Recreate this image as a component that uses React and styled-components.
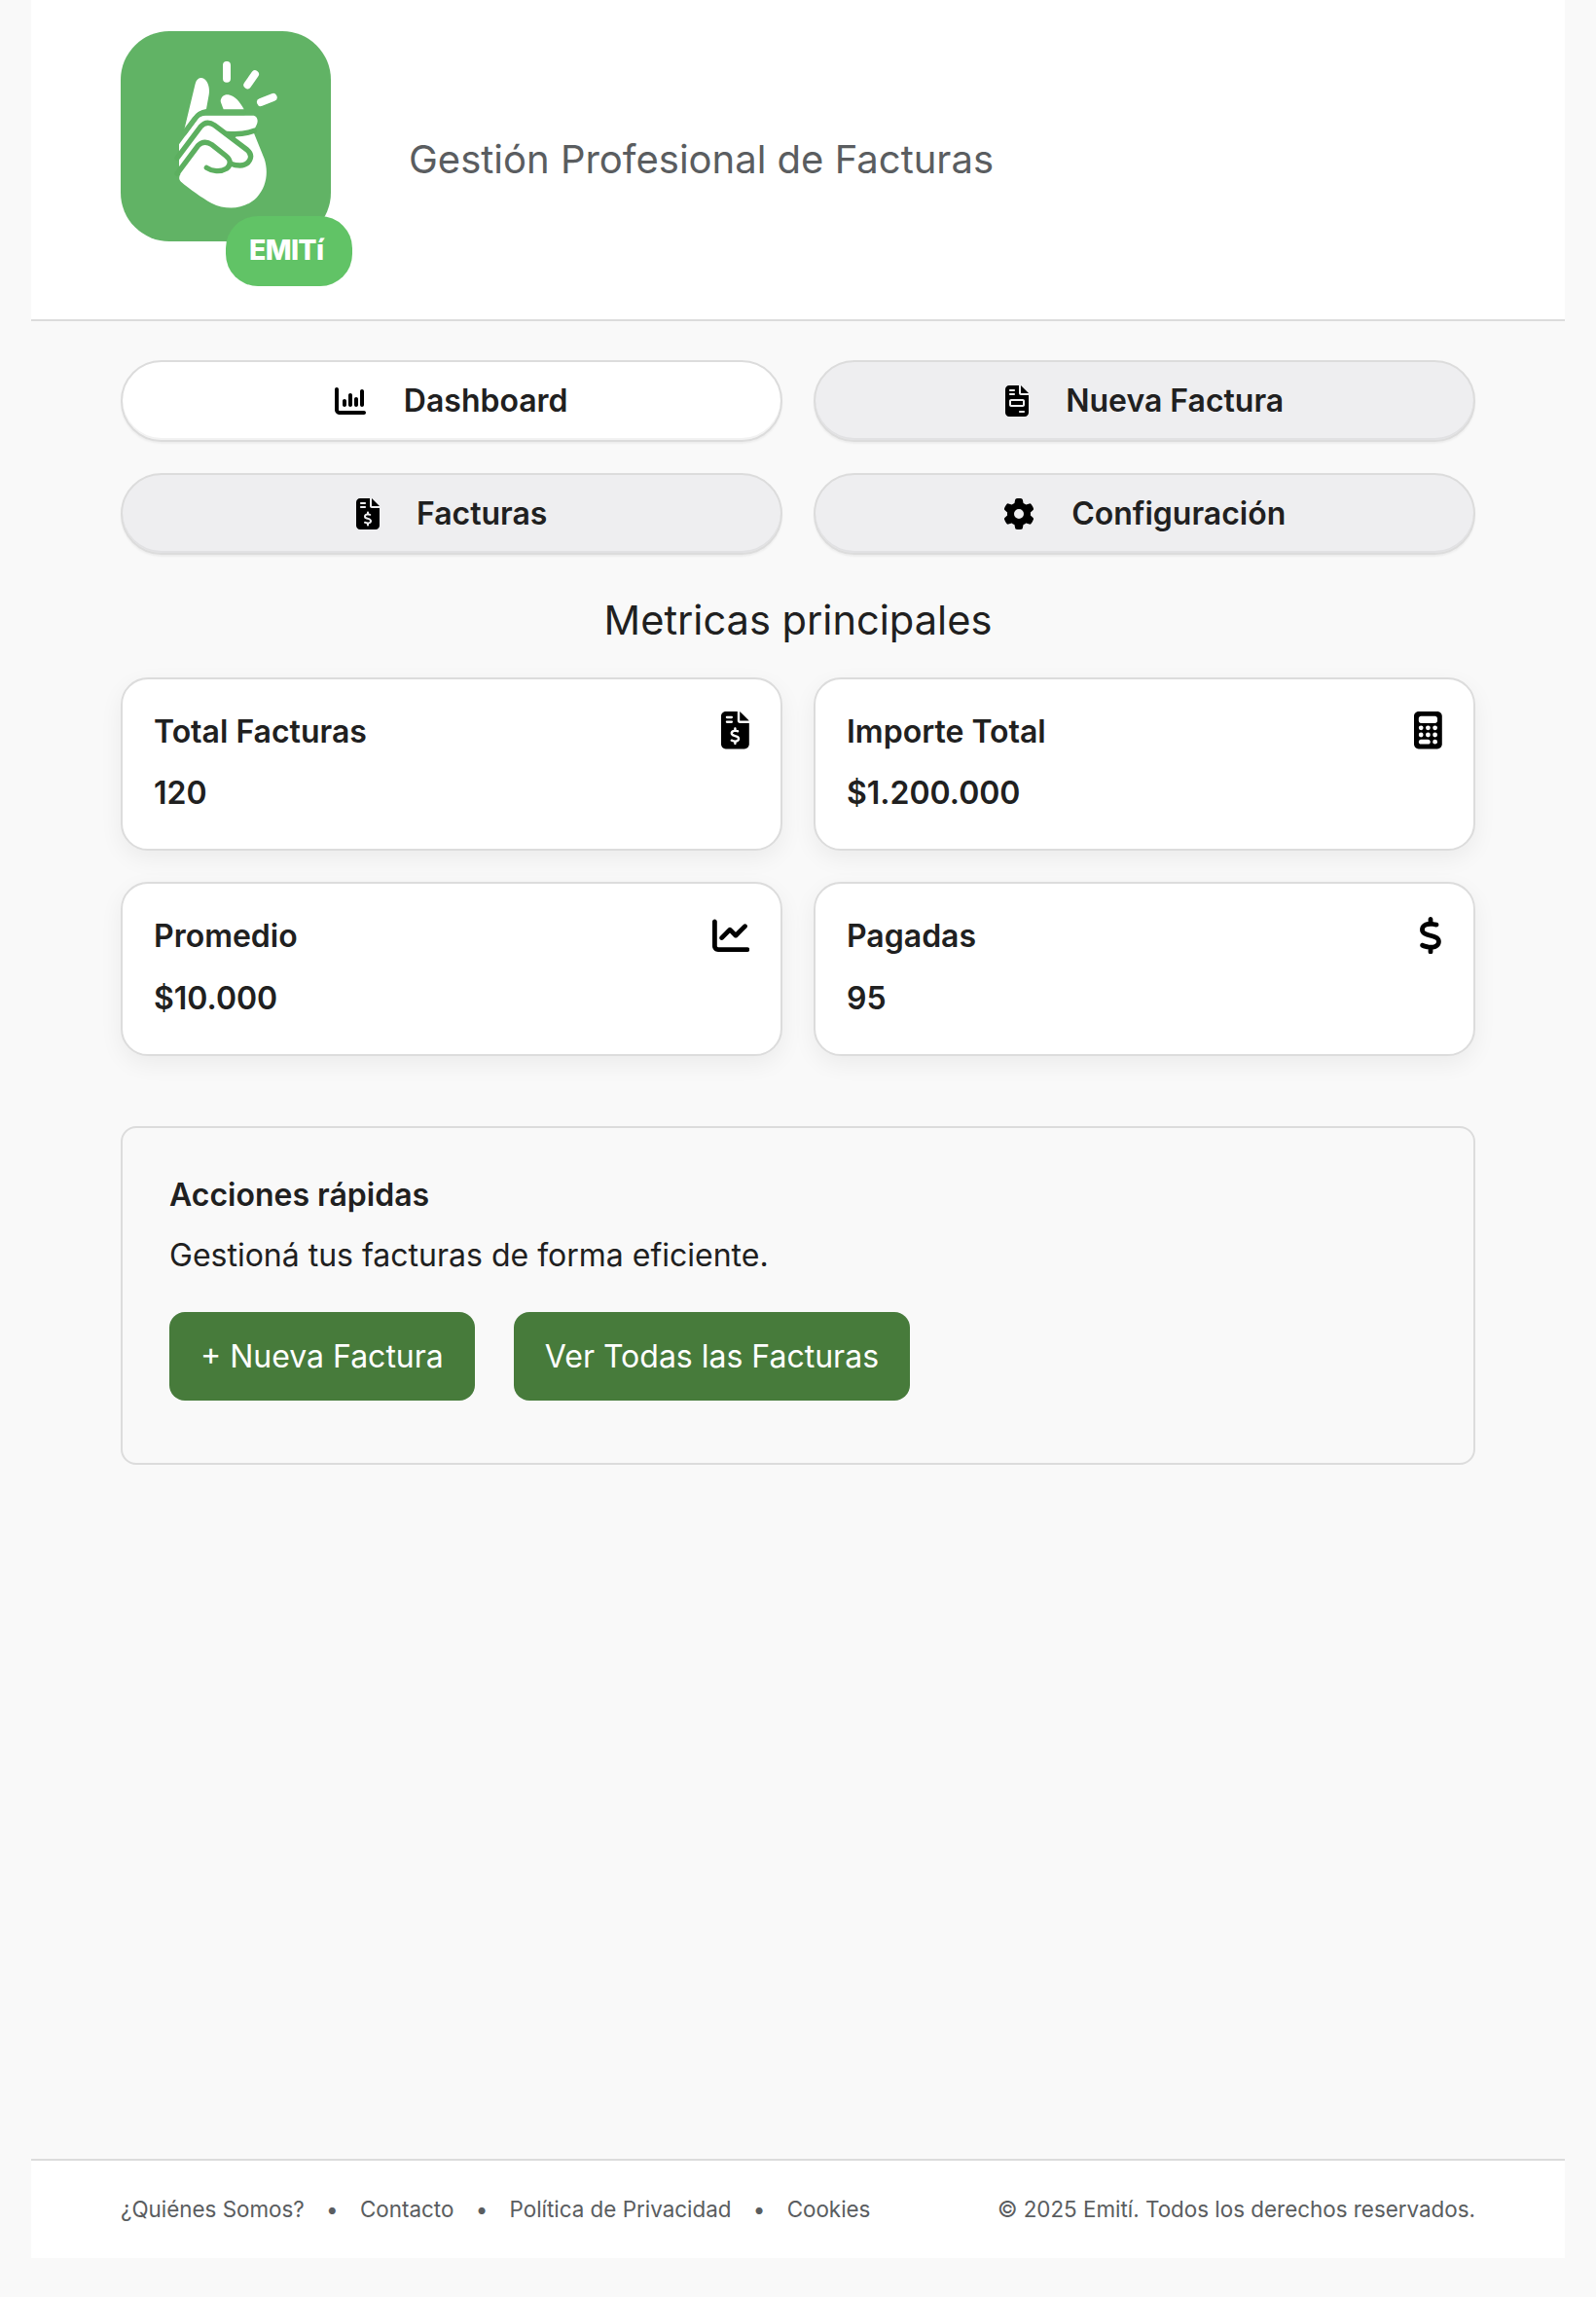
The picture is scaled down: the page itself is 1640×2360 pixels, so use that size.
import React from "react";
import styled, { createGlobalStyle } from "styled-components";
import {
  FaCalculator,
  FaChartColumn,
  FaChartLine,
  FaDollarSign,
  FaFileInvoice,
  FaFileInvoiceDollar,
  FaGear,
} from "react-icons/fa6";

const GlobalStyle = createGlobalStyle`
  * { box-sizing: border-box; }
  body {
    margin: 0;
    background: #f9f9f9;
    color: #202020;
    font-family: Inter, "Liberation Sans", sans-serif;
    font-size: 32px;
  }
  h1, h2, h3, p { margin: 0; }
`;

const Page = styled.div`
  display: flex;
  flex-direction: column;
  min-height: 2360px;
  padding: 0 32px 40px;
`;

const Header = styled.header`
  display: flex;
  align-items: center;
  gap: 56px;
  height: 330px;
  padding: 0 92px;
  background: #fff;
  border-bottom: 2px solid #dcdcdc;
`;

const Logo = styled.svg`
  display: block;
  width: 240px;
  height: 264px;
  flex: none;
`;

const Tagline = styled.p`
  font-size: 40px;
  line-height: 60px;
  color: #5a5d60;
`;

const Main = styled.main`
  flex: 1;
  padding: 40px 92px 0;
`;

const TwoColumns = styled.div`
  display: grid;
  grid-template-columns: 1fr 1fr;
  gap: 32px;
`;

const Glyph = styled.span`
  display: flex;
  flex: none;
  align-self: ${(p) => (p.$top ? "flex-start" : "center")};
  margin-top: ${(p) => (p.$top ? "1.4px" : "0")};
  font-size: ${(p) => p.$size}px;
  color: #000;
  svg {
    width: ${(p) => p.$ratio}em;
    height: 1em;
  }
`;

const NavButton = styled.button`
  display: flex;
  align-items: center;
  justify-content: center;
  gap: 38.4px;
  height: 84px;
  padding: 0;
  border: 2px solid #dcdcdc;
  border-radius: 42px;
  background: ${(p) => (p.$active ? "#fff" : "#eeeef0")};
  box-shadow: 0 2px 2px rgba(0, 0, 0, 0.05), inset 0 -2px 0 rgba(0, 0, 0, 0.05);
  font: 600 32px/48px Inter, "Liberation Sans", sans-serif;
  color: #202020;
`;

const SectionTitle = styled.h2`
  margin: 37px 0 29px;
  font-size: 41.6px;
  line-height: 60px;
  font-weight: 400;
  text-align: center;
`;

const MetricCard = styled.article`
  display: flex;
  justify-content: space-between;
  height: 178.4px;
  padding: 32px;
  border: 2px solid #dcdcdc;
  border-radius: 28px;
  background: #fff;
  box-shadow: 0 8px 24px rgba(0, 0, 0, 0.06);
`;

const MetricText = styled.div`
  display: flex;
  flex-direction: column;
  gap: 20.4px;
  font-weight: 600;
  line-height: 43px;
`;

const Actions = styled.section`
  height: 348px;
  margin-top: 72px;
  padding: 48px;
  border: 2px solid #dcdcdc;
  border-radius: 16px;
`;

const ActionsTitle = styled.h3`
  font-size: 32px;
  line-height: 42px;
  font-weight: 600;
`;

const ActionsText = styled.p`
  margin: 20px 0 37px;
  line-height: 42px;
`;

const ButtonRow = styled.div`
  display: flex;
  gap: 40px;
`;

const ActionButton = styled.button`
  height: 91px;
  padding: 1px 32px 0;
  border: 0;
  border-radius: 16px;
  background: #477b3b;
  color: #fff;
  font: 400 32px/48px Inter, "Liberation Sans", sans-serif;
`;

const Footer = styled.footer`
  display: flex;
  align-items: center;
  justify-content: space-between;
  height: 102px;
  padding: 0 92px 1px;
  background: #fff;
  border-top: 2px solid #dcdcdc;
  font-size: 22.4px;
  color: #5a5d60;
`;

const FooterLinks = styled.nav`
  display: flex;
  gap: 22.3px;
`;

const navItems = [
  { label: "Dashboard", icon: FaChartColumn, ratio: 1, active: true },
  { label: "Nueva Factura", icon: FaFileInvoice, ratio: 0.75 },
  { label: "Facturas", icon: FaFileInvoiceDollar, ratio: 0.75 },
  { label: "Configuración", icon: FaGear, ratio: 1 },
];

const metrics = [
  { label: "Total Facturas", value: "120", icon: FaFileInvoiceDollar, ratio: 0.75 },
  { label: "Importe Total", value: "$1.200.000", icon: FaCalculator, ratio: 0.75 },
  { label: "Promedio", value: "$10.000", icon: FaChartLine, ratio: 1 },
  { label: "Pagadas", value: "95", icon: FaDollarSign, ratio: 0.625 },
];

const footerLinks = ["¿Quiénes Somos?", "Contacto", "Política de Privacidad", "Cookies"];

function EmitiLogo() {
  return (
    <Logo viewBox="0 0 240 264">
      <rect width="216" height="216" rx="50" fill="#61b365" />
      <g transform="translate(-24 -22) scale(0.33333)">
        {/* snap lines */}
        <path
          d="M399 171v41M486 199l-23 33M542 270l-38 15"
          stroke="#fff"
          strokeWidth="24"
          strokeLinecap="round"
        />
        {/* index finger and thumb */}
        <g fill="#fff">
          <path d="M268 370L302 228C306 212 318 207 328 212C343 220 347 245 344 262L336 306C318 309 308 316 300 326Z" />
          <path d="M389 307C386 298 382 290 380 282C381 268 392 260 404 262C424 265 440 285 452 307Z" />
          {/* palm and folded fingers */}
          <path d="M252 415L303 345Q315 326 331 326H482C494 328 497 344 491 355Q488 364 480 372L484 383L515 460C528 500 522 545 492 578C456 615 400 620 352 596C320 578 285 553 258 530C250 522 252 514 256 508L252 478Z" />
        </g>
        {/* creases between the fingers */}
        <g fill="none" stroke="#5caf5f" strokeWidth="16" strokeLinecap="round" strokeLinejoin="round">
          <path d="M450 317H335C316 317 308 326 300 337L268 380" stroke="#61b365" />
          <path d="M246 457L318 361Q337 339 361 356L462 432C485 452 467 480 440 480Q424 480 413 475" />
          <path d="M246 505L311 418Q330 400 353 416L396 450C414 464 411 480 398 490C380 501 353 498 337 487" />
          <path d="M400 382C430 385 460 382 484 373" />
        </g>
        <path d="M394 380L422 397L432 386Z" fill="#5caf5f" />
      </g>
      <rect x="108" y="190" width="130" height="72" rx="33" fill="#61c366" />
      <text
        x="170.5"
        y="234.5"
        textAnchor="middle"
        fill="#fff"
        fontFamily="Inter, sans-serif"
        fontWeight="800"
        fontSize="28.5"
        textLength="77"
      >
        EMITí
      </text>
    </Logo>
  );
}

export default function App() {
  return (
    <>
      <GlobalStyle />
      <Page>
        <Header>
          <EmitiLogo />
          <Tagline>Gestión Profesional de Facturas</Tagline>
        </Header>
        <Main>
          <TwoColumns as="nav">
            {navItems.map(({ label, icon: Icon, ratio, active }) => (
              <NavButton key={label} $active={active}>
                <Glyph $size={32} $ratio={ratio}>
                  <Icon />
                </Glyph>
                {label}
              </NavButton>
            ))}
          </TwoColumns>
          <SectionTitle>Metricas principales</SectionTitle>
          <TwoColumns>
            {metrics.map(({ label, value, icon: Icon, ratio }) => (
              <MetricCard key={label}>
                <MetricText>
                  <p>{label}</p>
                  <p>{value}</p>
                </MetricText>
                <Glyph $size={38.4} $ratio={ratio} $top>
                  <Icon />
                </Glyph>
              </MetricCard>
            ))}
          </TwoColumns>
          <Actions>
            <ActionsTitle>Acciones rápidas</ActionsTitle>
            <ActionsText>Gestioná tus facturas de forma eficiente.</ActionsText>
            <ButtonRow>
              <ActionButton>+ Nueva Factura</ActionButton>
              <ActionButton>Ver Todas las Facturas</ActionButton>
            </ButtonRow>
          </Actions>
        </Main>
        <Footer>
          <FooterLinks>
            {footerLinks.map((link, i) => (
              <React.Fragment key={link}>
                {i > 0 && <span>•</span>}
                <span>{link}</span>
              </React.Fragment>
            ))}
          </FooterLinks>
          <p>© 2025 Emití. Todos los derechos reservados.</p>
        </Footer>
      </Page>
    </>
  );
}
